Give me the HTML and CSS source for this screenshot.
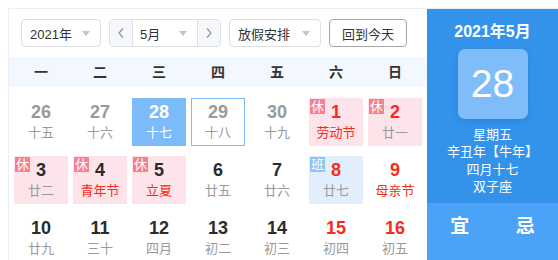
FILE: index.html
```html
<!DOCTYPE html>
<html lang="zh">
<head>
<meta charset="utf-8">
<title>万年历</title>
<link rel="stylesheet" href="styles.css">
</head>
<body>
<div class="cal">
  <div class="main">
    <div class="toolbar">
      <div class="select year"><span>2021年</span><i class="caret"></i></div>
      <div class="group">
        <button class="step"><svg width="6" height="10" viewBox="0 0 6 10"><polyline points="5,0.5 1,5 5,9.5" fill="none" stroke="#909399" stroke-width="1.2"/></svg></button>
        <div class="select month"><span>5月</span><i class="caret"></i></div>
        <button class="step next"><svg width="6" height="10" viewBox="0 0 6 10"><polyline points="1,0.5 5,5 1,9.5" fill="none" stroke="#909399" stroke-width="1.2"/></svg></button>
      </div>
      <div class="select holiday"><span>放假安排</span><i class="caret"></i></div>
      <button class="today-btn">回到今天</button>
    </div>
    <div class="week">
      <span>一</span><span>二</span><span>三</span><span>四</span><span>五</span><span>六</span><span>日</span>
    </div>
    <div class="grid">
      <div class="day other"><b>26</b><em>十五</em></div>
      <div class="day other"><b>27</b><em>十六</em></div>
      <div class="day selected"><b>28</b><em>十七</em></div>
      <div class="day other today"><b>29</b><em>十八</em></div>
      <div class="day other"><b>30</b><em>十九</em></div>
      <div class="day rest"><i class="tag">休</i><b class="red">1</b><em class="red">劳动节</em></div>
      <div class="day rest"><i class="tag">休</i><b class="red">2</b><em>廿一</em></div>

      <div class="day rest"><i class="tag">休</i><b>3</b><em>廿二</em></div>
      <div class="day rest"><i class="tag">休</i><b>4</b><em class="red">青年节</em></div>
      <div class="day rest"><i class="tag">休</i><b>5</b><em class="red">立夏</em></div>
      <div class="day"><b>6</b><em>廿五</em></div>
      <div class="day"><b>7</b><em>廿六</em></div>
      <div class="day work"><i class="tag">班</i><b class="red">8</b><em>廿七</em></div>
      <div class="day"><b class="red">9</b><em class="red">母亲节</em></div>

      <div class="day"><b>10</b><em>廿九</em></div>
      <div class="day"><b>11</b><em>三十</em></div>
      <div class="day"><b>12</b><em>四月</em></div>
      <div class="day"><b>13</b><em>初二</em></div>
      <div class="day"><b>14</b><em>初三</em></div>
      <div class="day"><b class="red">15</b><em>初四</em></div>
      <div class="day"><b class="red">16</b><em>初五</em></div>

      <div class="day"><b>17</b><em>初六</em></div>
      <div class="day"><b>18</b><em>初七</em></div>
      <div class="day"><b>19</b><em>初八</em></div>
      <div class="day"><b>20</b><em>初九</em></div>
      <div class="day"><b>21</b><em class="red">小满</em></div>
      <div class="day"><b class="red">22</b><em>十一</em></div>
      <div class="day"><b class="red">23</b><em>十二</em></div>
    </div>
  </div>
  <div class="side">
    <div class="side-top">
      <div class="ym">2021年5月</div>
      <div class="big">28</div>
      <div class="info">
        <p>星期五</p>
        <p>辛丑年【牛年】</p>
        <p>四月十七</p>
        <p>双子座</p>
      </div>
    </div>
    <div class="side-bottom">
      <span>宜</span><span>忌</span>
    </div>
  </div>
</div>
</body>
</html>
```

FILE: styles.css
```css
html, body {
  overflow: hidden;
}
body {
  margin: 8px 0 0 8px;
  font-family: "Liberation Sans", Arial, "Noto Sans CJK SC", sans-serif;
  color: #333;
  background: #fff;
}
.cal {
  display: flex;
  border-top: 1px solid #ebeef5;
  border-left: 1px solid #ebeef5;
}
.main {
  width: 418px;
  flex: none;
}
.toolbar {
  display: flex;
  gap: 8px;
  padding: 10px 12px;
  height: 28px;
}
.select {
  box-sizing: border-box;
  height: 28px;
  border: 1px solid #dcdfe6;
  border-radius: 4px;
  display: flex;
  align-items: center;
  justify-content: space-between;
  padding: 0 10px 0 8px;
  font-size: 13px;
  color: #333;
  background: #fff;
}
.caret {
  width: 0;
  height: 0;
  border-left: 4px solid transparent;
  border-right: 4px solid transparent;
  border-top: 5px solid #c0c4cc;
}
.year { width: 80px; }
.holiday { width: 92px; }
.group {
  box-sizing: border-box;
  display: flex;
  width: 112px;
  height: 28px;
  border: 1px solid #dcdfe6;
  border-radius: 4px;
  overflow: hidden;
}
.step {
  width: 23px;
  height: 26px;
  border: 0;
  border-right: 1px solid #dcdfe6;
  background: #f5f7fa;
  padding: 0;
  display: flex;
  align-items: center;
  justify-content: center;
}
.step.next {
  border-right: 0;
  border-left: 1px solid #dcdfe6;
}
.group .month {
  border: 0;
  border-radius: 0;
  height: 26px;
  flex: 1;
  padding: 0 10px 0 7px;
}
.today-btn {
  box-sizing: border-box;
  width: 78px;
  height: 28px;
  border: 1px solid #a6a6a6;
  border-radius: 4px;
  background: #fff;
  font-family: inherit;
  font-size: 13px;
  color: #333;
  padding: 0;
}
.week {
  display: grid;
  grid-template-columns: repeat(7, 54px);
  column-gap: 5px;
  padding: 0 5px;
  height: 30px;
  line-height: 30px;
  background: #f3f8fe;
  text-align: center;
  font-size: 14px;
  font-weight: bold;
  color: #333;
}
.grid {
  display: grid;
  grid-template-columns: repeat(7, 54px);
  grid-auto-rows: 48px;
  column-gap: 5px;
  row-gap: 10px;
  padding: 11px 5px 10px;
}
.day {
  position: relative;
  box-sizing: border-box;
  text-align: center;
  padding-top: 4px;
}
.day b {
  display: block;
  font-size: 18px;
  line-height: 21px;
  font-weight: bold;
  color: #2b2b2b;
}
.day em {
  display: block;
  font-style: normal;
  font-size: 13px;
  line-height: 20px;
  color: #999;
}
.day.other b { color: #999; }
.day .red { color: #f52b1b; }
.day.selected {
  background: #7cbbf9;
}
.day.selected b, .day.selected em { color: #fff; }
.day.today {
  border: 1px solid #7cbbf9;
  padding-top: 3px;
}
.day.rest { background: #fde4ea; }
.day.work { background: #e2eefc; }
.tag {
  position: absolute;
  left: 1px;
  top: 1px;
  width: 15px;
  height: 15px;
  line-height: 15px;
  font-size: 13px;
  font-style: normal;
  color: #fff;
  background: #f5808f;
  text-align: center;
}
.work .tag { background: #8fc2f4; }
.side {
  width: 131px;
  flex: none;
  display: flex;
  flex-direction: column;
  background: #4ba3f7;
  color: #fff;
}
.side-top {
  background: #3393ea;
  height: 194px;
  box-sizing: border-box;
  padding-top: 12px;
  text-align: center;
}
.ym {
  font-size: 16px;
  font-weight: bold;
  line-height: 22px;
}
.big {
  width: 70px;
  height: 70px;
  margin: 6px auto 0;
  border-radius: 7px;
  background: #7ebdfa;
  box-shadow: 0 2px 6px rgba(20, 90, 170, 0.25);
  font-size: 39px;
  line-height: 70px;
}
.info {
  margin-top: 7px;
  font-size: 13px;
  line-height: 17.3px;
}
.info p { margin: 0; }
.side-bottom {
  flex: 1;
  display: flex;
  padding-top: 13px;
}
.side-bottom span {
  flex: 1;
  text-align: center;
  font-size: 19px;
  font-weight: bold;
  line-height: 22px;
}
```
